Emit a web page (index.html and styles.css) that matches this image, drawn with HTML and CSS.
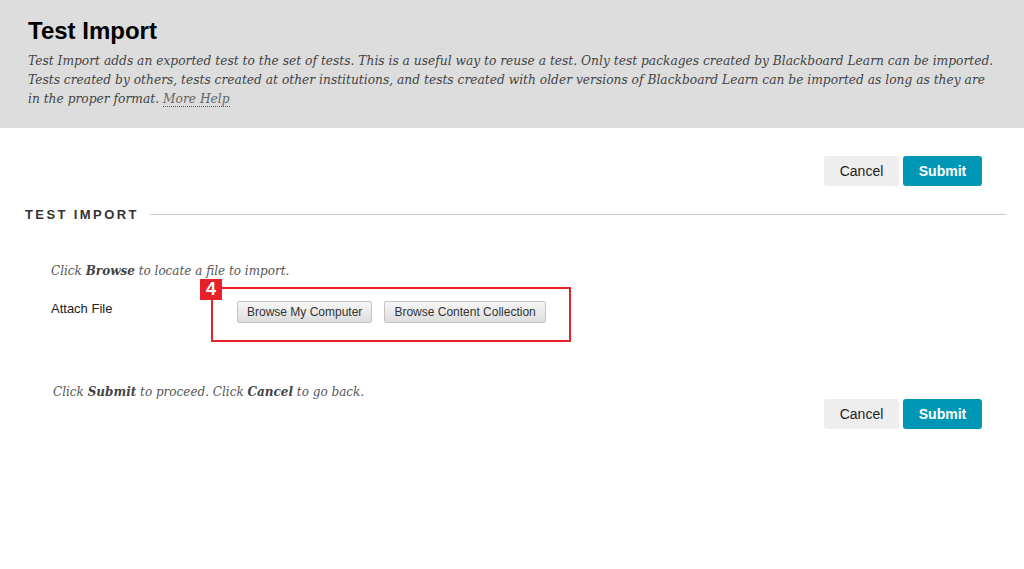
FILE: index.html
```html
<!DOCTYPE html>
<html>
<head>
<meta charset="utf-8">
<link rel="stylesheet" href="styles.css">
</head>
<body>
<header class="page-header">
  <h1 class="page-title">Test Import</h1>
  <p class="page-desc">Test Import adds an exported test to the set of tests. This is a useful way to reuse a test. Only test packages created by Blackboard Learn can be imported. Tests created by others, tests created at other institutions, and tests created with older versions of Blackboard Learn can be imported as long as they are in the proper format. <a class="help-link" href="#">More Help</a></p>
</header>
<main class="content">
  <div class="actions actions-top">
    <button class="btn btn-cancel">Cancel</button>
    <button class="btn btn-submit">Submit</button>
  </div>
  <section class="step">
    <div class="step-heading">
      <h2 class="step-title">TEST IMPORT</h2>
      <div class="step-rule"></div>
    </div>
    <p class="instructions">Click <b>Browse</b> to locate a file to import.</p>
    <div class="field-row">
      <div class="field-label">Attach File</div>
      <div class="field-box">
        <span class="badge">4</span>
        <button class="browse-btn">Browse My Computer</button>
        <button class="browse-btn">Browse Content Collection</button>
      </div>
    </div>
  </section>
  <div class="submit-row">
    <p class="instructions proceed">Click <b>Submit</b> to proceed. Click <b>Cancel</b> to go back.</p>
    <div class="actions actions-bottom">
      <button class="btn btn-cancel">Cancel</button>
      <button class="btn btn-submit">Submit</button>
    </div>
  </div>
</main>
</body>
</html>
```

FILE: styles.css
```css
html, body {
  margin: 0;
  padding: 0;
  background: #ffffff;
}
body {
  font-family: "Liberation Sans", Arial, sans-serif;
  width: 1024px;
  height: 569px;
  overflow: hidden;
}
.page-header {
  background: #dddddd;
  height: 128px;
  box-sizing: border-box;
  padding: 17px 28px 0 28px;
}
.page-title {
  margin: 0;
  font-family: "Liberation Sans", Arial, sans-serif;
  font-weight: bold;
  font-size: 24px;
  line-height: 28px;
  color: #000;
}
.page-desc {
  margin: 7px 0 0 0;
  font-family: "DejaVu Serif", Georgia, serif;
  font-style: italic;
  font-size: 12.25px;
  line-height: 19px;
  color: #444444;
}
.help-link {
  color: #666666;
  text-decoration: none;
  border-bottom: 1px dotted #555;
}
.actions {
  display: flex;
  justify-content: flex-end;
  gap: 4px;
  padding-right: 42px;
}
.actions-top {
  padding-top: 28px;
}
.btn {
  height: 30px;
  border: none;
  border-radius: 3px;
  font-family: "Liberation Sans", Arial, sans-serif;
  font-size: 14px;
  padding: 0;
  cursor: pointer;
}
.btn-cancel {
  width: 75px;
  background: #eeeeee;
  color: #222;
}
.btn-submit {
  width: 79px;
  background: #0097b6;
  color: #fff;
  font-weight: bold;
}
.step {
  padding: 0 18px 0 25px;
}
.step-heading {
  display: flex;
  align-items: center;
  margin-top: 20px;
  height: 16px;
}
.step-title {
  margin: 0;
  font-family: "Liberation Sans", Arial, sans-serif;
  font-size: 13px;
  font-weight: bold;
  letter-spacing: 2.4px;
  color: #333333;
  white-space: nowrap;
  padding-right: 11px;
}
.step-rule {
  flex: 1;
  height: 1px;
  background: #c8c8c8;
}
.instructions {
  margin: 40px 0 0 26px;
  font-family: "DejaVu Serif", Georgia, serif;
  font-style: italic;
  font-size: 12px;
  line-height: 18px;
  color: #555555;
}
.instructions b {
  color: #444;
}
.field-row {
  display: flex;
  margin-top: 7px;
  margin-left: 26px;
}
.field-label {
  width: 160px;
  font-size: 13px;
  color: #222;
  padding-top: 14px;
}
.field-box {
  position: relative;
  box-sizing: border-box;
  width: 360px;
  height: 55px;
  border: 2px solid #e8202a;
  display: flex;
  align-items: flex-start;
  gap: 12px;
  padding-left: 24px;
  padding-top: 12px;
}
.badge {
  position: absolute;
  left: -13px;
  top: -10px;
  width: 22px;
  height: 21px;
  background: #e8202a;
  color: #fff;
  font-family: "Liberation Sans", Arial, sans-serif;
  font-weight: bold;
  font-size: 18px;
  line-height: 21px;
  text-align: center;
}
.browse-btn {
  height: 22px;
  padding: 0 9px;
  border: 1px solid #c4c4c4;
  border-radius: 2px;
  background: linear-gradient(#f6f6f6, #dddddd);
  font-family: "Liberation Sans", Arial, sans-serif;
  font-size: 12px;
  color: #333;
}
.submit-row {
  padding-left: 53px;
}
.proceed {
  margin: 41px 0 0 0;
}
.actions-bottom {
  margin-top: -2px;
}
```
